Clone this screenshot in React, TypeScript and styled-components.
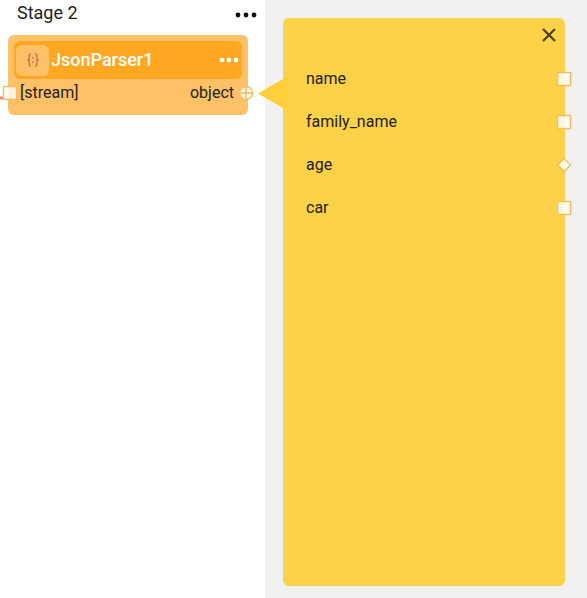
import React from "react";
import styled, { createGlobalStyle } from "styled-components";

const GlobalStyle = createGlobalStyle`
  *, *::before, *::after { box-sizing: border-box; }
  body {
    margin: 0;
    background: #fff;
    color: #212121;
    font-family: Roboto, "Liberation Sans", sans-serif;
    font-size: 16px;
    line-height: 20px;
  }
  button {
    display: flex;
    align-items: center;
    justify-content: center;
    padding: 0;
    border: 0;
    background: none;
    color: inherit;
    cursor: pointer;
  }
  svg { display: block; }
`;

const Page = styled.main`
  display: grid;
  grid-template-columns: 265px minmax(0, 1fr);
  min-height: 100vh;
`;

const Stage = styled.section`
  min-width: 0;
`;

const StageHeader = styled.header`
  display: flex;
  align-items: center;
  justify-content: space-between;
  height: 35px;
  padding: 0 8px 10px 17px;
`;

const StageTitle = styled.h1`
  margin: 0;
  font-size: 18px;
  font-weight: 400;
  line-height: 24px;
`;

const StageMenu = styled.button`
  height: 20px;
  margin-top: 5px;
  color: #111;
`;

const Node = styled.article`
  margin: 0 17px 0 8px;
  height: 80px;
  padding: 6px;
  border-radius: 6px;
  background: #ffc168;
`;

const NodeHeader = styled.div`
  display: flex;
  align-items: center;
  height: 38px;
  padding: 0 3px 0 2px;
  border-radius: 6px;
  background: #ffa722;
  color: #fff;
`;

const NodeIcon = styled.span`
  display: flex;
  align-items: center;
  justify-content: center;
  width: 33px;
  height: 31px;
  border-radius: 6px;
  background: #ffc168;
`;

const NodeTitle = styled.h2`
  flex: 1;
  margin: 0 0 0 2px;
  font-size: 18px;
  font-weight: 500;
  line-height: 24px;
`;

const PortRow = styled.div`
  position: relative;
  display: flex;
  justify-content: space-between;
  margin: 4px -6px 0;
  padding: 0 14px 0 12px;
`;

const PortAnchor = styled.span<{ $side: "left" | "right"; $inset: number }>`
  position: absolute;
  top: 50%;
  ${(p) => p.$side}: ${(p) => p.$inset}px;
  transform: translateY(-50%);
`;

const Canvas = styled.section`
  display: flex;
  padding: 18px 22px 12px 18px;
  background: #f1f1f1;
`;

const Panel = styled.aside`
  position: relative;
  flex: 1;
  border-radius: 6px;
  background: #fdd148;
`;

const Pointer = styled.svg`
  position: absolute;
  top: 58px;
  left: -25px;
`;

const PanelHeader = styled.div`
  display: flex;
  justify-content: flex-end;
  padding: 7px 6px 0 0;
`;

const CloseButton = styled.button`
  width: 20px;
  height: 20px;
`;

const FieldList = styled.ul`
  display: grid;
  gap: 23px;
  margin: 24px 0 0;
  padding: 0;
  list-style: none;
`;

const Field = styled.li`
  position: relative;
  padding-left: 23px;
`;

type DotsProps = { gap: number; radius: number };

function Dots({ gap, radius }: DotsProps) {
  const width = gap * 2 + 6;
  return (
    <svg width={width} height="6" fill="currentColor" aria-hidden="true">
      {[0, 1, 2].map((i) => (
        <circle key={i} cx={3 + i * gap} cy="3" r={radius} />
      ))}
    </svg>
  );
}

type PortKind = "square" | "diamond" | "object";

function Port({ kind }: { kind: PortKind }) {
  return (
    <svg width="16" height="16" viewBox="0 0 16 16" fill="none" stroke="#ffb957" strokeWidth="1.4" aria-hidden="true">
      {kind === "square" && <rect x="1.5" y="1.5" width="13" height="13" fill="#fff" fillOpacity="0.82" />}
      {kind === "diamond" && <path d="M8 1.5 14.5 8 8 14.5 1.5 8Z" fill="#fff" fillOpacity="0.82" />}
      {kind === "object" && (
        <>
          <circle cx="8" cy="8" r="6.5" fill="#fff" fillOpacity="0.82" />
          <path d="M8 1.5V14.5M1.5 8H14.5" />
        </>
      )}
    </svg>
  );
}

const fields: { name: string; kind: PortKind }[] = [
  { name: "name", kind: "square" },
  { name: "family_name", kind: "square" },
  { name: "age", kind: "diamond" },
  { name: "car", kind: "square" },
];

export default function App() {
  return (
    <>
      <GlobalStyle />
      <Page>
        <Stage>
          <StageHeader>
            <StageTitle>Stage 2</StageTitle>
            <StageMenu type="button" aria-label="Stage options">
              <Dots gap={8} radius={2.4} />
            </StageMenu>
          </StageHeader>
          <Node>
            <NodeHeader>
              <NodeIcon>
                <svg width="14" height="14" viewBox="0 0 14 14" fill="none" stroke="#cf6845" strokeWidth="1.3" aria-hidden="true">
                  <path d="M5 1.2H4.4Q3.2 1.2 3.2 2.6V5Q3.2 7 1.4 7Q3.2 7 3.2 9V11.4Q3.2 12.8 4.4 12.8H5M9 1.2H9.6Q10.8 1.2 10.8 2.6V5Q10.8 7 12.6 7Q10.8 7 10.8 9V11.4Q10.8 12.8 9.6 12.8H9" />
                  <path d="M6.2 4.7H7.8M6.2 9.3H7.8" strokeWidth="1.6" />
                </svg>
              </NodeIcon>
              <NodeTitle>JsonParser1</NodeTitle>
              <button type="button" aria-label="JsonParser1 options">
                <Dots gap={7} radius={2.4} />
              </button>
            </NodeHeader>
            <PortRow>
              <PortAnchor $side="left" $inset={-8}>
                <svg width="4" height="14" aria-hidden="true">
                  <path d="M0 12H4" stroke="#ef8a78" strokeWidth="3" />
                </svg>
              </PortAnchor>
              <PortAnchor $side="left" $inset={-6}>
                <Port kind="square" />
              </PortAnchor>
              <span>[stream]</span>
              <span>object</span>
              <PortAnchor $side="right" $inset={-6}>
                <Port kind="object" />
              </PortAnchor>
            </PortRow>
          </Node>
        </Stage>
        <Canvas>
          <Panel aria-label="object fields">
            <Pointer width="30" height="35" viewBox="0 0 30 35" aria-hidden="true">
              <path d="M0 17.5 30 0V35Z" fill="#ffcf3a" />
            </Pointer>
            <PanelHeader>
              <CloseButton type="button" aria-label="Close">
                <svg width="14" height="14" viewBox="0 0 14 14" fill="none" stroke="#4c4118" strokeWidth="2.2" aria-hidden="true">
                  <path d="M1 1 13 13M13 1 1 13" />
                </svg>
              </CloseButton>
            </PanelHeader>
            <FieldList>
              {fields.map((field) => (
                <Field key={field.name}>
                  {field.name}
                  <PortAnchor $side="right" $inset={-7}>
                    <Port kind={field.kind} />
                  </PortAnchor>
                </Field>
              ))}
            </FieldList>
          </Panel>
        </Canvas>
      </Page>
    </>
  );
}
